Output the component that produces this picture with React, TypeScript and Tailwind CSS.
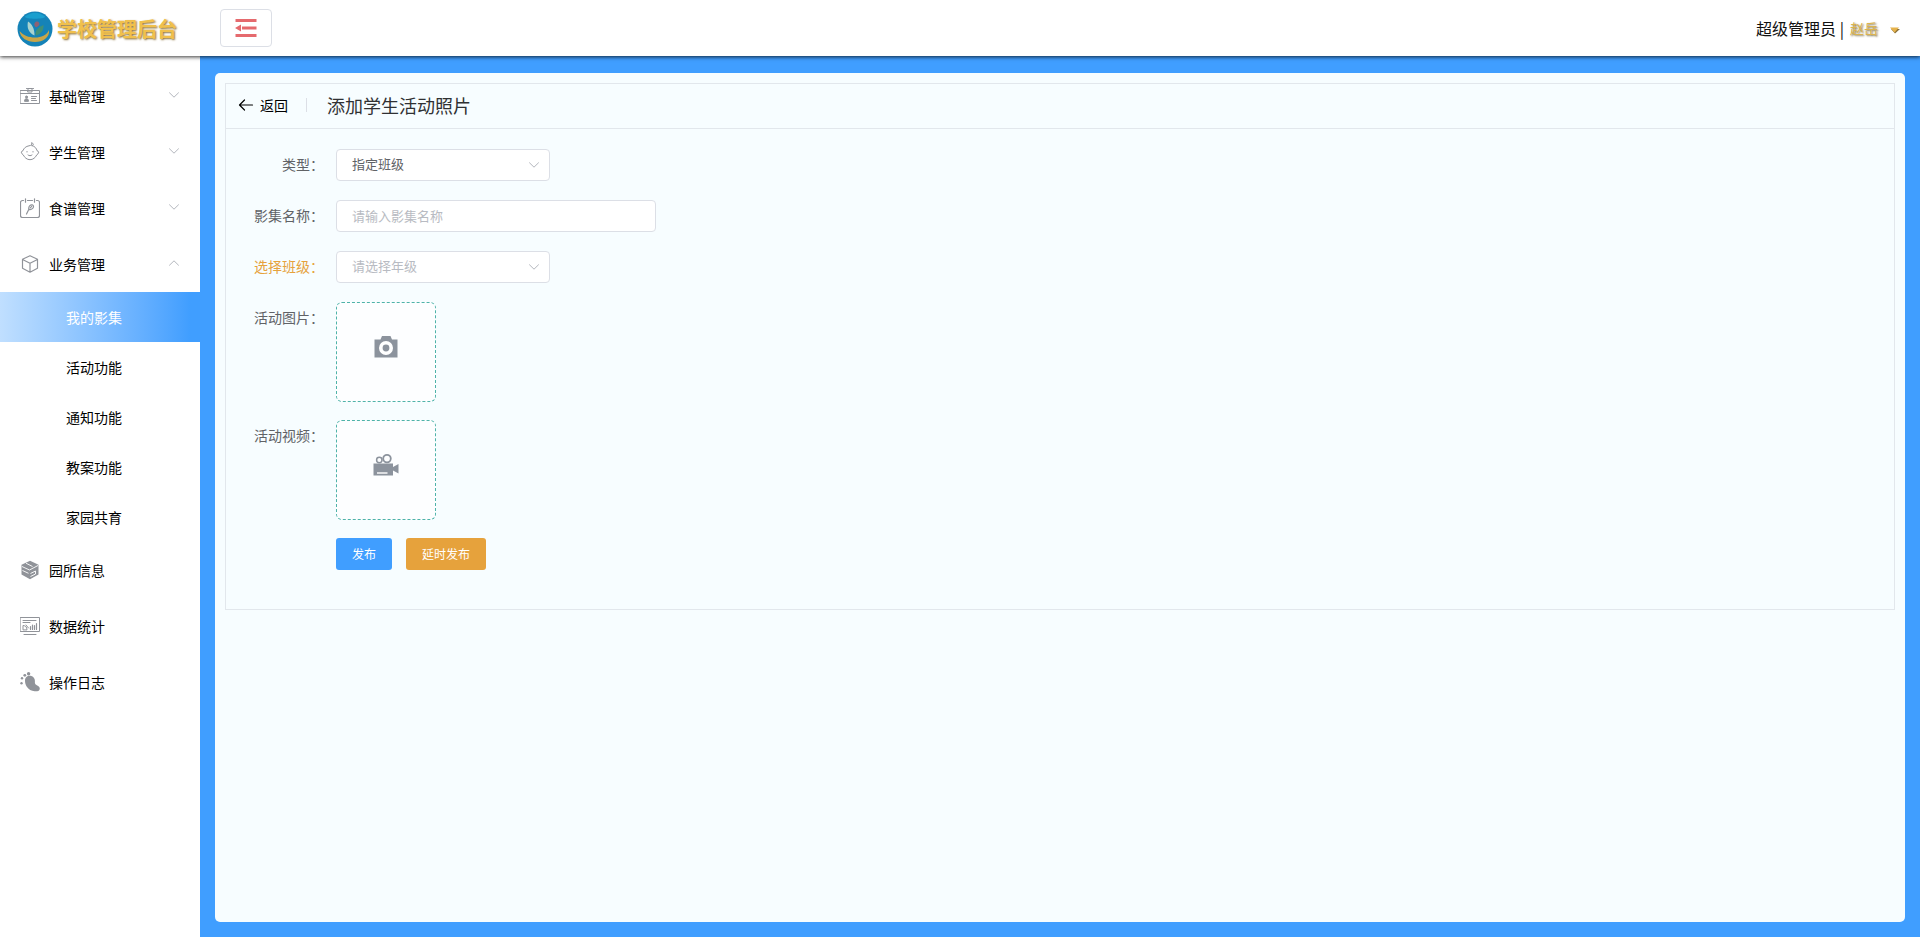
import { useState, type ReactNode } from 'react'

const stroke = { fill: 'none', stroke: 'currentColor', strokeWidth: 1, strokeLinecap: 'round', strokeLinejoin: 'round' } as const

const CardIcon = () => (
  <svg viewBox="0 0 20 20" className="h-5 w-5" {...stroke}>
    <path d="M.5 4.500h19v13H.5zM.5 7.500h19M8 4V2.500h4V6H8zM6.500 2.500h1M12.500 2.500h1" />
    <path d="M11.500 10.500h5M11.500 12.500h4M11.500 14.500h5" />
    <path d="M4.500 15c0-1.600.8-2.300 2-2.300s2 .7 2 2.300z" fill="currentColor" />
    <circle cx="6.500" cy="11" r="1" fill="currentColor" />
  </svg>
)

const BabyIcon = () => (
  <svg viewBox="0 0 20 20" className="h-5 w-5" {...stroke}>
    <path d="M12 3.600c3 .6 4.500 2.900 5 5.100 1.700.3 2.200 2 1 3.100l-1.200 1C15.500 15.600 13 17.700 10 17.700s-5.500-2.100-6.800-4.900l-1.200-1C.8 10.700 1.300 9 3 8.700c.8-2.600 3-4.400 6-4.900 2.200-.3 3.500-1.300 2.500-3.100 2.400.9 2.600 2.300.5 2.900z" />
    <path d="M7 9.500v.5M13 9.500v.5M8 13c1.200 1 2.800 1 4 0" />
  </svg>
)

const RecipeIcon = () => (
  <svg viewBox="0 0 20 20" className="h-5 w-5" {...stroke} strokeWidth="1.200">
    <path d="M3.500 2.500h-1a2 2 0 0 0-2 2v13a2 2 0 0 0 2 2h15a2 2 0 0 0 2-2v-13a2 2 0 0 0-2-2h-1M7.500 2.500h5M5.500.8v3.400M14.500.8v3.400" />
    <path d="M6.500 16l2.500-5M8.700 10.500c0-2.500 1.800-4 3.600-3.600 1.500.4 1.600 2.300.4 3.500-1 1-2.200 1.600-3.700 1.100z" />
    <path d="M10.200 9.800l1.500-1.500" />
  </svg>
)

const BoxIcon = () => (
  <svg viewBox="0 0 20 20" className="h-5 w-5" {...stroke} strokeWidth="1.200">
    <path d="M10 1.800l7.500 3.500v9L10 18.200l-7.500-3.900v-9zM2.500 5.500L10 9.300l7.500-3.800M10 9.300v8.900" />
  </svg>
)

const CubeIcon = () => (
  <svg viewBox="0 0 20 20" className="h-5 w-5">
    <path d="M10 .8l8.500 4v9.600L10 19.200l-8.500-4.800V4.800z" fill="currentColor" />
    <path d="M2 6.500l7.500 3.500 8.500-4.500M6 3.200l6.500 3.300M2.500 10.500l6 2.800M10.500 13.500l5-2.500v3l-5 2.500" fill="none" stroke="#fff" strokeWidth=".9" />
  </svg>
)

const ChartIcon = () => (
  <svg viewBox="0 0 20 20" className="h-5 w-5" {...stroke}>
    <path d="M.5 1.500h19v14H.5zM3 4.500h13M3 6.500h7M4 18.500h12" />
    <path d="M10.500 13.500v-3M12.500 13.500V9M14.500 13.500v-4M16.500 13.500v-6" strokeWidth="1.200" />
    <path d="M3 13.500V9.500c2.400 0 4 1.600 4 4zM6 9l2.500 3" />
  </svg>
)

const FootIcon = () => (
  <svg viewBox="0 0 20 20" className="h-5 w-5" fill="currentColor">
    <path d="M5 8.500c0-3.200 2.700-5.300 5.700-4.700 3 .7 4.400 3 4.200 5.700-.2 2.200.4 3 2.300 4 1.600.9 2.900 1.900 2.500 3.700-.4 1.700-2.500 2.300-5 2.100-3.400-.2-6.100-1.800-7.900-4.500C5.500 12.800 5 10.700 5 8.500z" />
    <circle cx="8.600" cy="1.700" r="1.700" />
    <circle cx="4.800" cy="3.300" r="1.400" />
    <circle cx="2" cy="6.300" r="1.200" />
    <circle cx="1.500" cy="11.200" r="1.200" />
  </svg>
)

const Chevron = ({ className }: { className?: string }) => (
  <svg viewBox="0 0 12 12" className={className} {...stroke}>
    <path d="M1.500 3.800L6 8.200l4.500-4.400" />
  </svg>
)

const Logo = () => (
  <svg viewBox="0 0 36 36" className="h-9 w-9">
    <circle cx="18" cy="18" r="17.500" fill="#1583b8" />
    <path d="M8 5.500a15 15 0 0 1 20 0c2 3-22 3-20 0z" fill="#1b9fce" />
    <path d="M2.500 20c4 4.500 9 6.500 15.500 6.500S29.500 24.500 32 19c1 7.500-6 12-14 12S3.500 27 2.500 20z" fill="#c9a548" />
    <path d="M17.500 24.500C12 22 9.500 17 11 10.500c4 2.500 6.700 7.500 6.500 14z" fill="#a9d3cf" />
    <path d="M18.500 24.500c-.5-4.500 2-8 8-10.500.5 5-2.500 9.500-8 10.500z" fill="#3f9079" />
    <path d="M17.500 12.500c1-2.300 3.500-2.600 4.600-.8 1 1.800-.8 3.800-3 4.500-1.500-1-2.200-2.400-1.600-3.700z" fill="#8d6274" />
  </svg>
)

const CameraIcon = () => (
  <svg viewBox="0 0 24 24" className="h-6 w-6">
    <path d="M.5 4.500h6L8 1h8.500L18 4.500h5.500v18H.5z" fill="currentColor" />
    <circle cx="12" cy="13" r="5.200" fill="none" stroke="#fff" strokeWidth="3.600" />
  </svg>
)

const VideoIcon = () => (
  <svg viewBox="0 0 26 24" className="h-6 w-[26px]">
    <g fill="none" stroke="currentColor">
      <circle cx="6.300" cy="7" r="2.700" strokeWidth="1.500" />
      <circle cx="14" cy="5.600" r="3.800" strokeWidth="1.800" />
    </g>
    <path d="M.5 10.500h19.500v3.500l5.500-3v9.500L20 17.500v5H.5z" fill="currentColor" />
    <path d="M4 20h10.500" stroke="#fff" strokeWidth="1.400" />
  </svg>
)

const menus = [
  { label: '基础管理', icon: CardIcon, group: true },
  { label: '学生管理', icon: BabyIcon, group: true },
  { label: '食谱管理', icon: RecipeIcon, group: true },
  {
    label: '业务管理',
    icon: BoxIcon,
    group: true,
    children: ['我的影集', '活动功能', '通知功能', '教案功能', '家园共育'],
  },
  { label: '园所信息', icon: CubeIcon },
  { label: '数据统计', icon: ChartIcon },
  { label: '操作日志', icon: FootIcon },
]

function Header() {
  return (
    <header className="relative z-10 flex h-14 items-center bg-white pr-5 shadow-[0_1px_4px_rgba(0,0,0,0.8)]">
      <div className="flex w-[220px] items-center gap-1 pt-0.5 pl-[17px]">
        <Logo />
        <span className="text-[20px] leading-6 font-bold text-[#f0c04c] [text-shadow:1px_1px_2px_#8a7038]">学校管理后台</span>
      </div>
      <button type="button" aria-label="收起菜单" className="flex h-[38px] w-[52px] items-center justify-center rounded border border-[#dcdfe6] bg-white text-[#e56a6e]">
        <svg viewBox="0 0 22 18" className="h-[18px] w-[22px]" fill="currentColor">
          <path d="M.5 0h21v3H.5zM7 7.500h14.500v3H7zM.5 15h21v3H.5zM0 9l6-3.500v7z" />
        </svg>
      </button>
      <div className="ml-auto flex items-center gap-1.5">
        <span className="text-base text-[#111]">超级管理员 |</span>
        <button type="button" className="flex items-center gap-3 text-sm text-[#dcb44e] [text-shadow:1px_1px_2px_#77683c]">
          赵岳
          <svg viewBox="0 0 10 8" className="mt-1 h-2 w-2.5">
            <path d="M1 3l4 4.500L10 3z" fill="#8a7038" />
            <path d="M0 1.500L4.500 6.500 9 1.500z" fill="#e6b24a" />
          </svg>
        </button>
      </div>
    </header>
  )
}

function Sidebar() {
  const [open, setOpen] = useState('业务管理')

  return (
    <nav className="w-[200px] shrink-0 bg-white pt-3 text-sm text-black">
      <ul>
        {menus.map(({ label, icon: Icon, group, children }) => (
          <li key={label}>
            <button
              type="button"
              onClick={() => setOpen(open === label ? '' : label)}
              className="flex h-14 w-full items-center gap-[9px] pr-5 pl-5"
            >
              <span className="text-[#909399]"><Icon /></span>
              {label}
              {group && (
                <Chevron className={`mb-0.5 ml-auto h-3 w-3 text-[#b4b7be] ${open === label ? 'rotate-180' : ''}`} />
              )}
            </button>
            {children && open === label && (
              <ul>
                {children.map((name, i) => (
                  <li key={name}>
                    <a
                      href="#"
                      className={`flex h-[50px] items-center pl-[66px] ${i === 0 ? 'bg-linear-to-r from-[#c0dfff] to-[#409eff] to-95% text-white' : ''}`}
                    >
                      {name}
                    </a>
                  </li>
                ))}
              </ul>
            )}
          </li>
        ))}
      </ul>
    </nav>
  )
}

type RowProps = { label?: string; htmlFor?: string; warn?: boolean; children: ReactNode }

function Row({ label, htmlFor, warn, children }: RowProps) {
  return (
    <div className="flex min-h-[33px] items-start">
      <div className={`w-[98px] shrink-0 pr-3 text-right text-sm leading-[30px] ${warn ? 'text-[#e6a23c]' : 'text-[#606266]'}`}>
        {label && <label htmlFor={htmlFor}>{label}</label>}
      </div>
      {children}
    </div>
  )
}

function Select({ id, options, muted }: { id: string; options: string[]; muted?: boolean }) {
  return (
    <div className="relative w-[214px]">
      <select
        id={id}
        className={`h-8 w-full appearance-none rounded border border-[#dcdfe6] bg-white px-[15px] pb-0.5 text-[13px] outline-none ${muted ? 'text-[#b8bbc2]' : 'text-[#606266]'}`}
      >
        {options.map((o) => <option key={o}>{o}</option>)}
      </select>
      <Chevron className="pointer-events-none absolute top-2.5 right-2.5 h-3 w-3 text-[#b4b7be]" />
    </div>
  )
}

function Upload({ id, accept, children }: { id: string; accept: string; children: ReactNode }) {
  return (
    <label
      htmlFor={id}
      className="flex h-[100px] w-[100px] cursor-pointer items-center justify-center rounded-md border border-dashed border-[#4fb3a9] bg-[#fdfeff] pb-2.5 text-[#8c939d]"
    >
      {children}
      <input id={id} type="file" accept={accept} className="sr-only" />
    </label>
  )
}

export default function App() {
  return (
    <div className="flex min-h-screen flex-col font-['Noto_Sans_CJK_SC',sans-serif]">
      <Header />
      <div className="flex flex-1">
        <Sidebar />
        <main className="flex flex-1 flex-col bg-[#409eff] px-[15px] pt-[17px] pb-[15px]">
          <div className="flex-1 rounded-[5px] bg-[#f7fdff] p-2.5">
            <section className="border border-[#e2e7ec]">
              <div className="flex h-[45px] items-center border-b border-[#e2e7ec] px-3 pb-0.5">
                <button type="button" className="flex items-center gap-1.5 text-sm text-black">
                  <svg viewBox="0 0 16 16" className="h-4 w-4" {...stroke} strokeWidth="1.200">
                    <path d="M14.500 8h-13M6.500 3L1.500 8l5 5" />
                  </svg>
                  返回
                </button>
                <span className="mr-5 ml-[18px] h-3.5 w-px bg-[#dcdfe6]" />
                <h1 className="text-lg text-[#303133]">添加学生活动照片</h1>
              </div>
              <form className="flex flex-col gap-[18px] px-3 pt-5 pb-[38px]">
                <Row label="类型：" htmlFor="type">
                  <Select id="type" options={['指定班级', '全园']} />
                </Row>
                <Row label="影集名称：" htmlFor="name">
                  <input
                    id="name"
                    type="text"
                    placeholder="请输入影集名称"
                    className="h-8 w-80 rounded border border-[#dcdfe6] bg-white px-[15px] pb-0.5 text-[13px] text-[#606266] outline-none placeholder:text-[#b8bbc2]"
                  />
                </Row>
                <Row label="选择班级：" htmlFor="grade" warn>
                  <Select id="grade" options={['请选择年级']} muted />
                </Row>
                <Row label="活动图片：" htmlFor="photo">
                  <Upload id="photo" accept="image/*"><CameraIcon /></Upload>
                </Row>
                <Row label="活动视频：" htmlFor="video">
                  <Upload id="video" accept="video/*"><VideoIcon /></Upload>
                </Row>
                <Row>
                  <div className="flex gap-3.5 text-xs text-white">
                    <button type="button" className="h-8 rounded-[3px] bg-[#409eff] px-4">发布</button>
                    <button type="button" className="h-8 rounded-[3px] bg-[#e6a23c] px-4">延时发布</button>
                  </div>
                </Row>
              </form>
            </section>
          </div>
        </main>
      </div>
    </div>
  )
}
